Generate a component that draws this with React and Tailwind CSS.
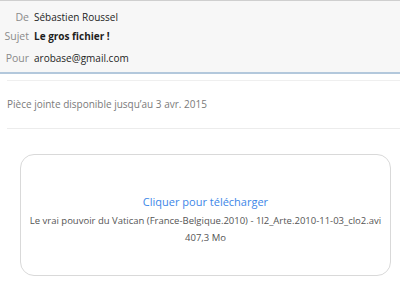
export default function App() {
  const font = { fontFamily: '"Open Sans", "Noto Sans", sans-serif' };
  return (
    <div className="w-[400px] h-[290px] bg-white overflow-hidden" style={font}>
      <div className="h-[74px] bg-[#f7f7f7] border-t border-[#cfcfcf] border-b-2 border-b-[#b3c8dc] pt-[7px]">
        <div className="flex items-center h-[19px]">
          <span className="w-[29px] text-right text-[10.5px] text-[#8a8a8a]">De</span>
          <span className="ml-[5px] text-[10px] text-[#1e1e1e]">Sébastien Roussel</span>
        </div>
        <div className="flex items-center h-[19px]">
          <span className="w-[29px] text-right text-[10.5px] text-[#8a8a8a]">Sujet</span>
          <span className="ml-[5px] text-[10px] font-bold text-[#1e1e1e]">Le gros fichier !</span>
        </div>
        <div className="flex items-center h-[19px] mt-[3px]">
          <span className="w-[29px] text-right text-[10.5px] text-[#8a8a8a]">Pour</span>
          <span className="ml-[5px] text-[10px] text-[#1e1e1e]">arobase@gmail.com</span>
        </div>
      </div>
      <div className="ml-[7px] mt-[6px] border-t border-[#efefef]">
        <div className="h-[47px] flex items-center text-[10px] text-[#7a7a7a]">
          Pièce jointe disponible jusqu’au 3 avr. 2015
        </div>
      </div>
      <div className="ml-[7px] border-t border-[#ececec]"></div>
      <div className="mt-[25px] ml-[20px] w-[371px] h-[122px] rounded-[14px] border border-[#d9d9d9] flex flex-col items-center pt-[39px]">
        <div className="text-[11px] leading-[16px] text-[#3d86e8]">Cliquer pour télécharger</div>
        <div className="mt-[4px] text-[9.5px] leading-[14px] text-[#555]">
          Le vrai pouvoir du Vatican (France-Belgique.2010) - 1l2_Arte.2010-11-03_clo2.avi
        </div>
        <div className="mt-[3px] text-[9.5px] leading-[14px] text-[#555]">407,3 Mo</div>
      </div>
    </div>
  );
}
